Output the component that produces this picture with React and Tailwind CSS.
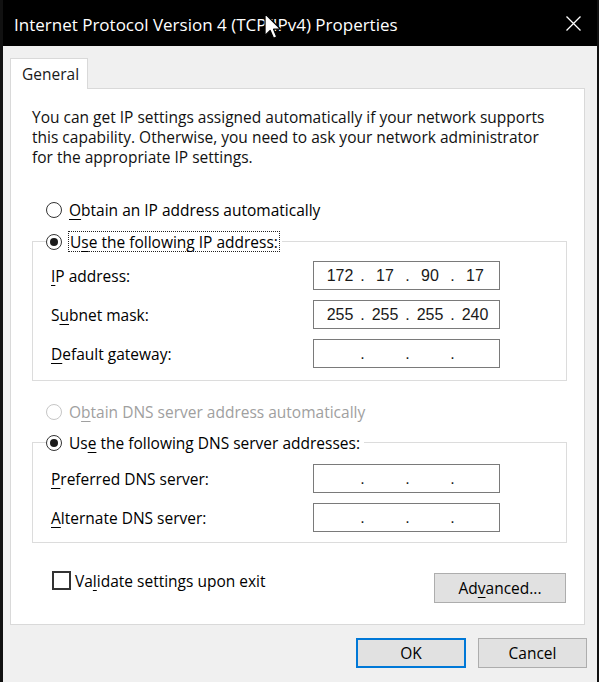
import React from "react";

const U = ({ children }) => (
  <span className="underline underline-offset-[3px] decoration-1">{children}</span>
);

function Radio({ checked, disabled }) {
  return (
    <span
      className={
        "w-4 h-4 shrink-0 rounded-full border bg-white flex items-center justify-center " +
        (disabled ? "border-[#c6c6c6]" : "border-[#333333]")
      }
    >
      {checked && <span className="w-[8px] h-[8px] rounded-full bg-[#1a1a1a]" />}
    </span>
  );
}

function IpField({ values }) {
  const segs = values || ["", "", "", ""];
  return (
    <div className="h-[29px] w-[187px] border border-[#7a7a7a] bg-white flex items-center pl-[8px] font-['Liberation_Sans',sans-serif] text-[16px] text-[#1a1a1a]">
      {segs.map((v, i) => (
        <React.Fragment key={i}>
          {i > 0 && <span className="w-[9px] text-center">.</span>}
          <span className="w-[36px] text-center">{v}</span>
        </React.Fragment>
      ))}
    </div>
  );
}

function Btn({ children, primary, className = "" }) {
  return (
    <div
      className={
        "h-[30px] bg-[#e1e1e1] flex items-center justify-center text-[15.5px] text-black " +
        (primary ? "border-2 border-[#0078d7] " : "border border-[#adadad] ") +
        className
      }
    >
      {children}
    </div>
  );
}

export default function App() {
  return (
    <div className="relative w-[599px] h-[682px] flex flex-col bg-[#f0f0f0] border-l-[3px] border-r-[2px] border-[#111111] font-['Open_Sans',sans-serif] text-[15.5px] leading-[20px] text-black overflow-hidden">
      {/* Title bar */}
      <div className="h-[46px] shrink-0 bg-black flex items-center justify-between pl-[11px] pr-[16px]">
        <span className="text-white text-[17px] leading-[22px] mt-[3px]">
          Internet Protocol Version 4 (TCP/IPv4) Properties
        </span>
        <svg width="15" height="15" viewBox="0 0 15 15" className="shrink-0">
          <path d="M0.5 0.5 L14.5 14.5 M14.5 0.5 L0.5 14.5" stroke="#ffffff" strokeWidth="1.3" fill="none" />
        </svg>
      </div>

      {/* Body */}
      <div className="flex-1 flex flex-col pl-[7px] pr-[12px] pt-[12px]">
        {/* Tab */}
        <div className="relative z-10 -mb-px w-[78px] h-[31px] bg-white border border-b-0 border-[#d9d9d9] flex items-center pl-[11px] text-[#1a1a1a]">
          General
        </div>

        {/* Panel */}
        <div className="h-[537px] shrink-0 bg-white border border-[#d9d9d9] pl-[21px] pr-[17px] pt-[18px] flex flex-col">
          <p className="text-[#111111]">
            You can get IP settings assigned automatically if your network supports
            <br />
            this capability. Otherwise, you need to ask your network administrator
            <br />
            for the appropriate IP settings.
          </p>

          <div className="mt-[32px] h-[21px] flex items-center ml-[14px]">
            <Radio />
            <span className="ml-[7px]">
              <U>O</U>btain an IP address automatically
            </span>
          </div>

          {/* IP group */}
          <div className="mt-[21px] border border-[#dcdcdc] pb-[12px]">
            <div className="-mt-[11px] ml-[13px] w-fit bg-white pr-[2px] h-[21px] flex items-center">
              <Radio checked />
              <span className="ml-[6px] h-[21px] px-[1px] border border-dotted border-[#222222] flex items-center">
                U<U>s</U>e the following IP address:
              </span>
            </div>
            <div className="mt-[9px] ml-[18px] grid grid-cols-[262px_187px] gap-y-[10px] items-center">
              <span>
                <U>I</U>P address:
              </span>
              <IpField values={["172", "17", "90", "17"]} />
              <span>
                S<U>u</U>bnet mask:
              </span>
              <IpField values={["255", "255", "255", "240"]} />
              <span>
                <U>D</U>efault gateway:
              </span>
              <IpField />
            </div>
          </div>

          <div className="mt-[20px] h-[21px] flex items-center ml-[14px]">
            <Radio disabled />
            <span className="ml-[7px] text-[#a0a0a0]">
              O<U>b</U>tain DNS server address automatically
            </span>
          </div>

          {/* DNS group */}
          <div className="mt-[20px] border border-[#dcdcdc] pb-[10px]">
            <div className="-mt-[11px] ml-[13px] w-fit bg-white pr-[2px] h-[21px] flex items-center">
              <Radio checked />
              <span className="ml-[7px] pr-[2px]">
                Us<U>e</U> the following DNS server addresses:
              </span>
            </div>
            <div className="mt-[11px] ml-[18px] grid grid-cols-[262px_187px] gap-y-[10px] items-center">
              <span>
                <U>P</U>referred DNS server:
              </span>
              <IpField />
              <span>
                <U>A</U>lternate DNS server:
              </span>
              <IpField />
            </div>
          </div>

          {/* Validate + Advanced */}
          <div className="mt-[28px] flex items-start justify-between">
            <div className="ml-[20px] flex items-center h-[19px]">
              <span className="w-[19px] h-[19px] border-2 border-[#333333] bg-white" />
              <span className="ml-[4px]">
                Va<U>l</U>idate settings upon exit
              </span>
            </div>
            <Btn className="mt-[2px] mr-px w-[132px]">
              Ad<U>v</U>anced...
            </Btn>
          </div>
        </div>

        {/* Dialog buttons */}
        <div className="mt-[13px] -mr-[2px] flex justify-end gap-[12px]">
          <Btn primary className="w-[110px]">OK</Btn>
          <Btn className="w-[109px]">Cancel</Btn>
        </div>
      </div>

      {/* Mouse cursor */}
      <svg
        width="18"
        height="27"
        viewBox="0 0 13 20"
        className="absolute left-[261px] top-[13px] pointer-events-none"
      >
        <path
          d="M0.6 0.6 L0.6 16.6 L4.4 12.9 L6.9 18.7 L9.3 17.7 L6.9 12 L12.2 12 Z"
          fill="#ffffff"
          stroke="#000000"
          strokeWidth="0.9"
          strokeLinejoin="round"
        />
      </svg>
    </div>
  );
}
